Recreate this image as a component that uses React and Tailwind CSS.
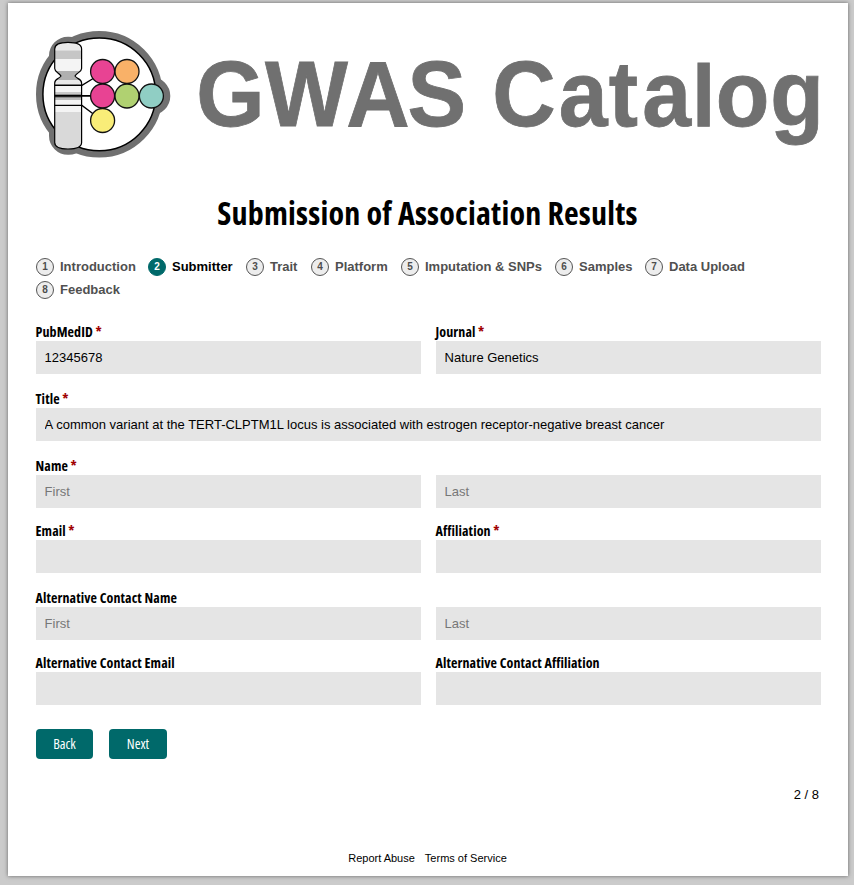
const STEPS = [
  { name: "Introduction", w: "w-[75px]" },
  { name: "Submitter", w: "w-[61px]", active: true },
  { name: "Trait", w: "w-[28px]" },
  { name: "Platform", w: "w-[53px]" },
  { name: "Imputation & SNPs", w: "w-[117px]" },
  { name: "Samples", w: "w-[53px]" },
  { name: "Data Upload", w: "w-[76px]" },
  { name: "Feedback", w: "w-[60px]" },
];

const CHROMOSOME =
  "M54.7 49 C54.7 44.5 60 42.4 68 42.4 C76 42.4 81.6 44.5 81.6 49 V68.5 C81.6 72 77 72.5 75 76 C77 79 81.6 79 81.6 83 V142.5 C81.6 147 76 149 68 149 C60 149 54.7 147 54.7 142.5 V83 C54.7 79 59 79 61 76 C59 72.5 54.7 72 54.7 68.5 Z";

// Horizontal letter positions of the wordmark, one per character.
const WORD_SCALE = 0.955;
const WORD_X = [196.2, 265, 346.3, 407.6, 468, 492.2, 558.8, 608.8, 642.2, 692, 715.8, 770.2]
  .map((x) => (x / WORD_SCALE).toFixed(1))
  .join(" ");

function Logo() {
  return (
    <svg className="block h-[140px] w-[785px] overflow-visible" viewBox="36 25 785 140" role="img" aria-label="GWAS Catalog">
      <g fill="none" stroke="#707070" strokeWidth="13" strokeLinejoin="round">
        <circle cx="99.3" cy="94.3" r="56.8" />
        <circle cx="151.2" cy="95.9" r="12.6" />
        <rect x="55" y="42.8" width="26.6" height="106" rx="13" strokeWidth="12" />
      </g>
      <circle cx="99.3" cy="94.3" r="56.4" fill="#fff" stroke="#000" strokeWidth="1.5" />
      <clipPath id="chromosome">
        <path d={CHROMOSOME} />
      </clipPath>
      <g clipPath="url(#chromosome)">
        <rect x="54" y="42" width="28" height="108" fill="#f4f4f4" />
        <rect x="54" y="42" width="28" height="8.5" fill="#e9e9e9" />
        <rect x="54" y="50.5" width="28" height="8.5" fill="#c6c6c6" />
        <rect x="54" y="71" width="28" height="9" fill="#b0b0b0" />
        <rect x="54" y="80" width="28" height="4" fill="#e8e8e8" />
        <rect x="54" y="92" width="28" height="2.5" fill="#c8c8c8" />
        <rect x="54" y="94" width="28" height="4.5" fill="#8c8c8c" />
        <rect x="54" y="98" width="28" height="2" fill="#bbb" />
        <rect x="54" y="112" width="28" height="37" fill="#d9d9d9" />
      </g>
      <path d={CHROMOSOME} fill="none" stroke="#000" strokeWidth="1.2" />
      <g fill="none" stroke="#000" strokeWidth="1.4">
        <path d="M54.7 85.3 H82 L94 78" />
        <path d="M54.7 95.9 H92" strokeWidth="1.8" />
        <path d="M54.7 105.4 H82 L94 114.5" />
      </g>
      <g stroke="#111" strokeWidth="1.3">
        <circle cx="102.6" cy="71.5" r="12" fill="#e84393" />
        <circle cx="127" cy="71.5" r="12" fill="#f9b168" />
        <circle cx="102.6" cy="96" r="12" fill="#e84393" />
        <circle cx="127" cy="96" r="12" fill="#b0d171" />
        <circle cx="151.4" cy="96" r="12" fill="#90cec4" />
        <circle cx="102.6" cy="120.5" r="12" fill="#f9ed78" />
      </g>
      <text
        transform={`scale(${WORD_SCALE} 1)`}
        x={WORD_X}
        y="126.5"
        strokeWidth="0.8"
        className="fill-[#707070] stroke-[#707070] font-['Liberation_Sans',Arial,sans-serif] text-[92px] font-bold"
      >
        GWAS Cata<tspan className="text-[88px]">l</tspan>og
      </text>
    </svg>
  );
}

function Step({ n, step }) {
  return (
    <li className="flex h-[23px] items-center">
      <span className={"mr-1.5 flex size-[18px] shrink-0 items-center justify-center rounded-full border text-[10px] leading-none font-bold " + (step.active ? "border-[#00696a] bg-[#00696a] text-white" : "border-[#555] bg-[#ededed] text-[#4d4d4d]")}>
        {n}
      </span>
      <span className={"text-[13px] leading-none font-bold whitespace-nowrap " + step.w + (step.active ? " text-black" : " text-[#505050]")}>
        {step.name}
      </span>
    </li>
  );
}

function Label({ children, required }) {
  return (
    <div className="-ml-[0.5px] h-[18px] font-['Open_Sans',sans-serif] text-[14px] leading-[18px] font-bold tracking-[0.1px] whitespace-nowrap font-stretch-75%">
      {children}
      {required && <span className="text-[#a00000]"> *</span>}
    </div>
  );
}

function Field({ label, required, value, placeholder }) {
  return (
    <div className="min-w-0 flex-1">
      <Label required={required}>{label}</Label>
      <input
        className="block h-[33px] w-full bg-[#e5e5e5] px-[8.6px] text-[13px] text-black outline-none placeholder:text-[#777]"
        defaultValue={value}
        placeholder={placeholder}
      />
    </div>
  );
}

function Button({ children, w }) {
  return (
    <button className={"h-[30px] rounded-[4px] bg-[#00696a] font-['Open_Sans',sans-serif] text-[14px] leading-none font-medium text-white font-stretch-75% " + w}>
      {children}
    </button>
  );
}

export default function App() {
  return (
    <div className="h-[885px] w-[854px] overflow-hidden bg-[#cbcbcb] pt-[3px] pl-2 font-['Liberation_Sans',Arial,sans-serif] text-black">
      <main className="h-[873px] w-[840px] bg-white pt-[22px] pr-[27px] pl-7 shadow-[0_0_4px_rgba(0,0,0,0.5)]">
        <Logo />
        <h1 className="mt-[26px] flex h-[44px] items-center justify-center pr-0.5 font-['Open_Sans',sans-serif] text-[32px] leading-[44px] font-bold tracking-[0.2px] whitespace-nowrap font-stretch-75%">
          Submission of Association Results
        </h1>
        <ol className="mt-5 flex flex-wrap gap-x-[13px]">
          {STEPS.map((s, i) => (
            <Step key={s.name} n={i + 1} step={s} />
          ))}
        </ol>
        <form className="mt-[22px]">
          <div className="flex gap-[15px]">
            <Field label="PubMedID" required value="12345678" />
            <Field label="Journal" required value="Nature Genetics" />
          </div>
          <div className="mt-4 flex">
            <Field label="Title" required value="A common variant at the TERT-CLPTM1L locus is associated with estrogen receptor-negative breast cancer" />
          </div>
          <div className="mt-4 flex gap-[15px]">
            <Field label="Name" required placeholder="First" />
            <Field placeholder="Last" />
          </div>
          <div className="mt-[14px] flex gap-[15px]">
            <Field label="Email" required />
            <Field label="Affiliation" required />
          </div>
          <div className="mt-4 flex gap-[15px]">
            <Field label="Alternative Contact Name" placeholder="First" />
            <Field placeholder="Last" />
          </div>
          <div className="mt-[14px] flex gap-[15px]">
            <Field label="Alternative Contact Email" />
            <Field label="Alternative Contact Affiliation" />
          </div>
          <div className="mt-6 flex gap-4">
            <Button w="w-[57px]">Back</Button>
            <Button w="w-[58px]">Next</Button>
          </div>
        </form>
        <p className="mt-7 pr-0.5 text-right text-[13px] leading-4">2 / 8</p>
        <footer className="mt-[47px] flex justify-center gap-2.5 pr-0.5 text-[11px] leading-4">
          <a>Report Abuse</a>
          <a>Terms of Service</a>
        </footer>
      </main>
    </div>
  );
}
